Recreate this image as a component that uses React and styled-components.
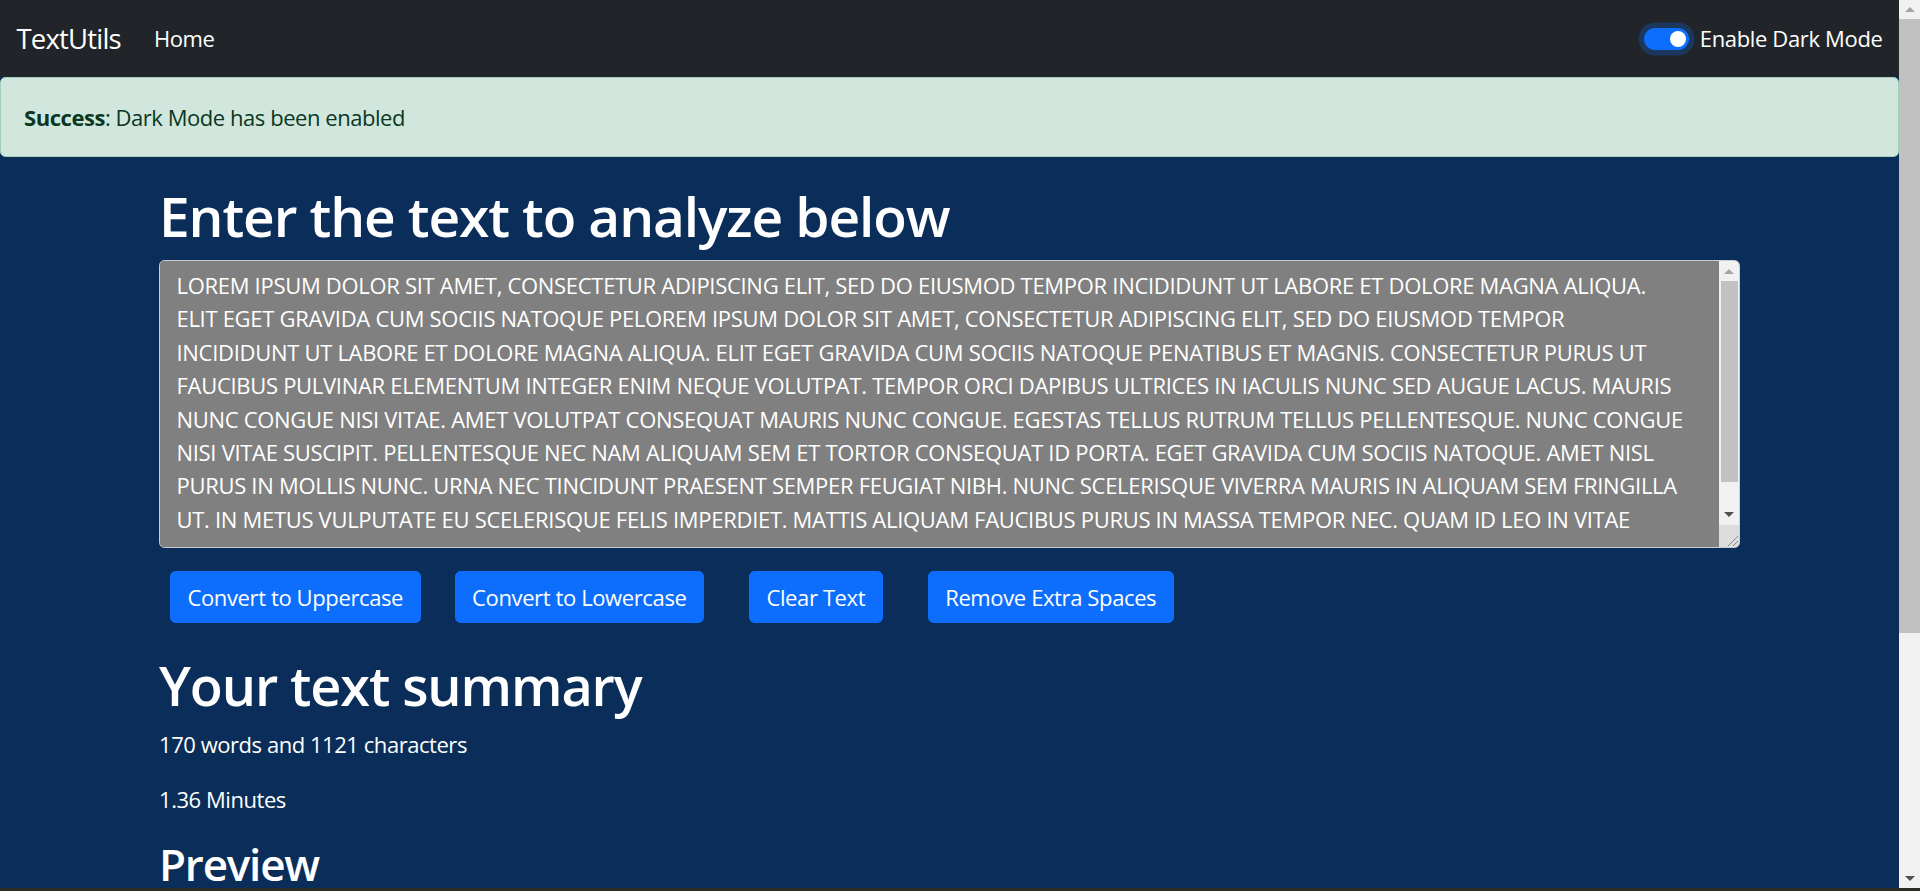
import React from 'react';
import styled, { createGlobalStyle } from 'styled-components';

const sample = [
  'LOREM IPSUM DOLOR SIT AMET, CONSECTETUR ADIPISCING ELIT, SED DO EIUSMOD TEMPOR INCIDIDUNT UT LABORE ET DOLORE MAGNA ALIQUA.',
  'ELIT EGET GRAVIDA CUM SOCIIS NATOQUE PELOREM IPSUM DOLOR SIT AMET, CONSECTETUR ADIPISCING ELIT, SED DO EIUSMOD TEMPOR',
  'INCIDIDUNT UT LABORE ET DOLORE MAGNA ALIQUA. ELIT EGET GRAVIDA CUM SOCIIS NATOQUE PENATIBUS ET MAGNIS. CONSECTETUR PURUS UT',
  'FAUCIBUS PULVINAR ELEMENTUM INTEGER ENIM NEQUE VOLUTPAT. TEMPOR ORCI DAPIBUS ULTRICES IN IACULIS NUNC SED AUGUE LACUS. MAURIS',
  'NUNC CONGUE NISI VITAE. AMET VOLUTPAT CONSEQUAT MAURIS NUNC CONGUE. EGESTAS TELLUS RUTRUM TELLUS PELLENTESQUE. NUNC CONGUE',
  'NISI VITAE SUSCIPIT. PELLENTESQUE NEC NAM ALIQUAM SEM ET TORTOR CONSEQUAT ID PORTA. EGET GRAVIDA CUM SOCIIS NATOQUE. AMET NISL',
  'PURUS IN MOLLIS NUNC. URNA NEC TINCIDUNT PRAESENT SEMPER FEUGIAT NIBH. NUNC SCELERISQUE VIVERRA MAURIS IN ALIQUAM SEM FRINGILLA',
  'UT. IN METUS VULPUTATE EU SCELERISQUE FELIS IMPERDIET. MATTIS ALIQUAM FAUCIBUS PURUS IN MASSA TEMPOR NEC. QUAM ID LEO IN VITAE',
].join('\n');

const actions = [
  { label: 'Convert to Uppercase', gap: 11 },
  { label: 'Convert to Lowercase', gap: 34 },
  { label: 'Clear Text', gap: 45 },
  { label: 'Remove Extra Spaces', gap: 45 },
];

const GlobalStyle = createGlobalStyle`
  html, body {
    margin: 0;
    padding: 0;
    height: 100%;
    overflow: hidden;
  }

  body {
    font-family: "Open Sans", "Noto Sans", sans-serif;
    letter-spacing: -0.45px;
    -webkit-font-smoothing: antialiased;
  }

  * {
    box-sizing: border-box;
  }
`;

const Screen = styled.div`
  display: flex;
  flex-direction: column;
  height: 891px;
  background: #0a2e59;
`;

const Viewport = styled.div`
  display: flex;
  flex: 1;
  min-height: 0;
`;

const Page = styled.div`
  display: flex;
  flex: 1;
  flex-direction: column;
  min-width: 0;
  overflow: hidden;
`;

const TaskbarEdge = styled.div`
  height: 3px;
  background: #2c2b24;
`;

const Navbar = styled.nav`
  display: flex;
  align-items: center;
  flex-shrink: 0;
  height: 77px;
  padding: 0 16.5px;
  background: #212529;
  color: #fff;
`;

const Brand = styled.span`
  font-size: 27.5px;
  line-height: 41px;
  letter-spacing: -0.8px;
  margin-right: 33px;
`;

const NavLink = styled.span`
  font-size: 22px;
  line-height: 33px;
`;

const ModeToggle = styled.label`
  display: flex;
  align-items: center;
  gap: 11px;
  margin-left: auto;
  font-size: 22px;
  line-height: 33px;
  letter-spacing: -0.35px;
`;

const SwitchTrack = styled.span`
  display: flex;
  align-items: center;
  justify-content: flex-end;
  width: 45px;
  height: 22px;
  padding: 0 3px;
  border-radius: 11px;
  background: #0d6efd;
  box-shadow: 0 0 0 5.5px rgba(13, 110, 253, 0.25);
`;

const SwitchKnob = styled.span`
  width: 16px;
  height: 16px;
  border-radius: 50%;
  background: #fff;
`;

const Alert = styled.div`
  flex-shrink: 0;
  padding: 22.5px 23px;
  border: 1px solid #a3cfbb;
  border-radius: 5.5px;
  background: #d1e7dd;
  color: #0a3622;
  font-size: 22px;
  line-height: 33px;

  strong {
    font-weight: 700;
  }
`;

const Container = styled.main`
  width: 1581px;
  margin: 26px auto 0;
  color: #fff;
`;

const Title = styled.h1`
  margin: ${(p) => p.$top || 0}px 0 ${(p) => p.$bottom || 0}px;
  font-size: ${(p) => p.$size || 55}px;
  font-weight: 600;
  line-height: 66px;
  letter-spacing: -1.1px;
`;

const SubTitle = styled.h2`
  margin: 14px 0 0;
  font-size: 44px;
  font-weight: 600;
  line-height: 1.2;
  letter-spacing: -1.2px;
`;

const Field = styled.div`
  display: flex;
  height: 288px;
  border: 1px solid #c9ced6;
  border-radius: 5.5px;
  overflow: hidden;
  background: #808080;
`;

const TextBox = styled.textarea`
  flex: 1;
  min-width: 0;
  margin: 0;
  padding: 8px 16.5px;
  border: none;
  outline: none;
  resize: none;
  overflow: hidden;
  white-space: pre;
  background: #808080;
  color: #fff;
  font-family: inherit;
  font-size: 22px;
  line-height: 33.4px;
  letter-spacing: -0.3px;
`;

const Rail = styled.div`
  display: flex;
  flex-direction: column;
  width: ${(p) => p.$width}px;
  background: #f1f1f1;
`;

const RailButton = styled.div`
  display: flex;
  align-items: center;
  justify-content: center;
  height: ${(p) => p.$height}px;
  flex-shrink: 0;
`;

const Arrow = styled.span`
  width: 0;
  height: 0;
  border-left: 5px solid transparent;
  border-right: 5px solid transparent;
  ${(p) =>
    p.$down
      ? `border-top: 5px solid ${p.$color};`
      : `border-bottom: 5px solid ${p.$color};`}
`;

const RailTrack = styled.div`
  flex: 1;
  padding: 0 ${(p) => p.$inset};
`;

const Thumb = styled.div`
  height: ${(p) => p.$height}px;
  background: #c1c1c1;
`;

const Resizer = styled.div`
  display: flex;
  align-items: flex-end;
  justify-content: flex-end;
  height: 22px;
  flex-shrink: 0;
  background: #dcdcdc;
`;

const ButtonRow = styled.div`
  display: flex;
  margin-top: 23px;
`;

const ActionButton = styled.button`
  height: 52px;
  margin: 0 0 0 ${(p) => p.$gap}px;
  padding: 0 16.5px;
  border: 1px solid #0d6efd;
  border-radius: 5.5px;
  background: #0d6efd;
  color: #fff;
  font-family: inherit;
  font-size: 22px;
  line-height: 33px;
  letter-spacing: -0.38px;
  cursor: pointer;
`;

const Stat = styled.p`
  margin: 0 0 22px;
  font-size: 22px;
  line-height: 33px;
`;

const ScrollBar = ({ width, inset, thumb, upHeight, downHeight, children }) => (
  <Rail $width={width}>
    <RailButton $height={upHeight}>
      <Arrow $color="#a3a3a3" />
    </RailButton>
    <RailTrack $inset={inset}>
      <Thumb $height={thumb} />
    </RailTrack>
    <RailButton $height={downHeight}>
      <Arrow $down $color="#505050" />
    </RailButton>
    {children}
  </Rail>
);

export default function App() {
  return (
    <>
      <GlobalStyle />
      <Screen>
        <Viewport>
          <Page>
            <Navbar>
              <Brand>TextUtils</Brand>
              <NavLink>Home</NavLink>
              <ModeToggle>
                <SwitchTrack>
                  <SwitchKnob />
                </SwitchTrack>
                Enable Dark Mode
              </ModeToggle>
            </Navbar>
            <Alert>
              <strong>Success</strong>: Dark Mode has been enabled
            </Alert>
            <Container>
              <Title $bottom={11}>Enter the text to analyze below</Title>
              <Field>
                <TextBox defaultValue={sample} spellCheck={false} />
                <ScrollBar width={20} inset="1px 0 2px" thumb={201} upHeight={20} downHeight={21}>
                  <Resizer>
                    <svg width="14" height="14" viewBox="0 0 14 14">
                      <path d="M13 3 L3 13 M13 8 L8 13" stroke="#8a8a8a" strokeWidth="1" />
                    </svg>
                  </Resizer>
                </ScrollBar>
              </Field>
              <ButtonRow>
                {actions.map((a) => (
                  <ActionButton key={a.label} $gap={a.gap}>
                    {a.label}
                  </ActionButton>
                ))}
              </ButtonRow>
              <Title $top={29} $bottom={10} $size={54}>
                Your text summary
              </Title>
              <Stat>170 words and 1121 characters</Stat>
              <Stat>1.36 Minutes</Stat>
              <SubTitle>Preview</SubTitle>
            </Container>
          </Page>
          <ScrollBar width={21} inset="0 2px 0 3px" thumb={614} upHeight={19} downHeight={20} />
        </Viewport>
        <TaskbarEdge />
      </Screen>
    </>
  );
}
